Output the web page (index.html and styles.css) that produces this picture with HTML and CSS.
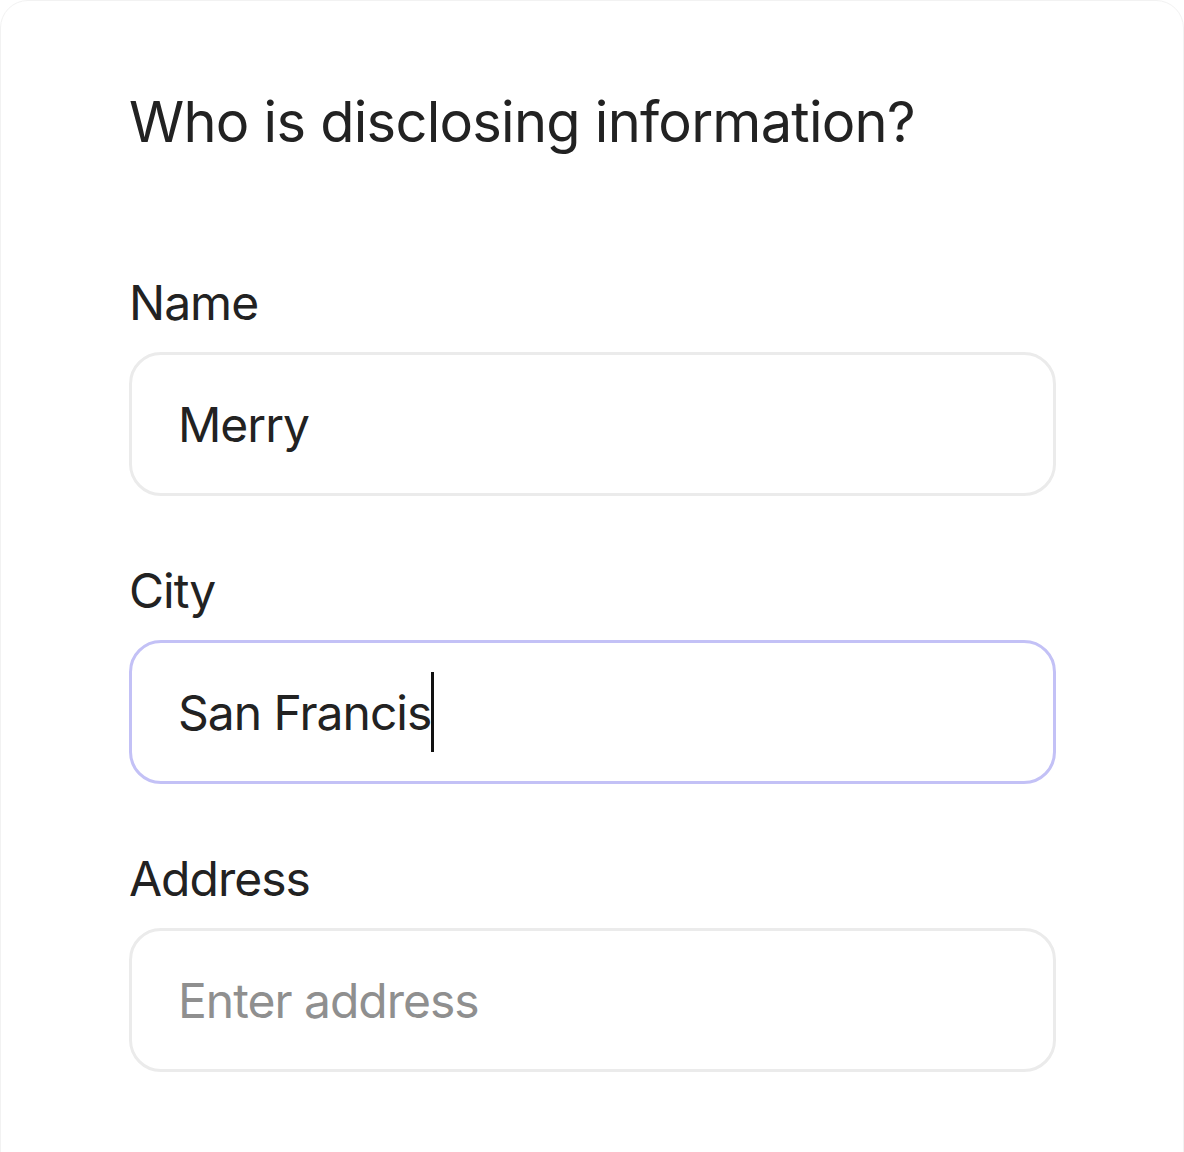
FILE: index.html
```html
<!DOCTYPE html>
<html lang="en">
<head>
  <meta charset="UTF-8">
  <meta name="viewport" content="width=device-width, initial-scale=1.0"/>
  <title>Disclosure form</title>
  <link rel="stylesheet" href="styles.css">
</head>
<body>
  <div class="card">
    <h2>Who is disclosing information?</h2>

    <!-- name -->
    <div class="field">
      <label for="name">Name</label>
      <input type="text" id="name" class="box" value="Merry" readonly>
    </div>

    <!-- city, shown focused with caret -->
    <div class="field">
      <label>City</label>
      <div class="box focused">San Francis<span class="caret"></span></div>
    </div>

    <!-- address -->
    <div class="field">
      <label for="address">Address</label>
      <input type="text" id="address" class="box" placeholder="Enter address" readonly>
    </div>
  </div>
</body>
</html>
```

FILE: styles.css
```css
* {
  box-sizing: border-box;
  margin: 0;
  padding: 0;
  font-family: Inter, 'Noto Sans', sans-serif;
}

body {
  background: #fff;
  overflow: hidden;
  color: #222;
}

.card {
  min-height: 1200px;
  border: 1px solid #f2f2f2;
  border-radius: 28px;
  padding: 87px 128px 0 128px;
}

h2 {
  font-size: 56px;
  font-weight: 400;
  line-height: 68px;
  letter-spacing: -0.75px;
  margin-bottom: 118px;
}

.field {
  display: flex;
  flex-direction: column;
  margin-bottom: 66px;
}

label {
  font-size: 48px;
  line-height: 58px;
  letter-spacing: -1px;
  margin-bottom: 20px;
}

.box {
  display: flex;
  align-items: center;
  width: 927px;
  height: 144px;
  padding: 0 46px;
  border: 3px solid #ebebeb;
  border-radius: 32px;
  background: #fff;
  font-size: 48px;
  letter-spacing: -1px;
  color: #222;
  outline: none;
}

.box::placeholder {
  color: #8f8f8f;
}

.focused {
  border-color: #c3c1f6;
}

.caret {
  display: inline-block;
  width: 3px;
  height: 80px;
  margin-left: 0;
  background: #111;
}
```
